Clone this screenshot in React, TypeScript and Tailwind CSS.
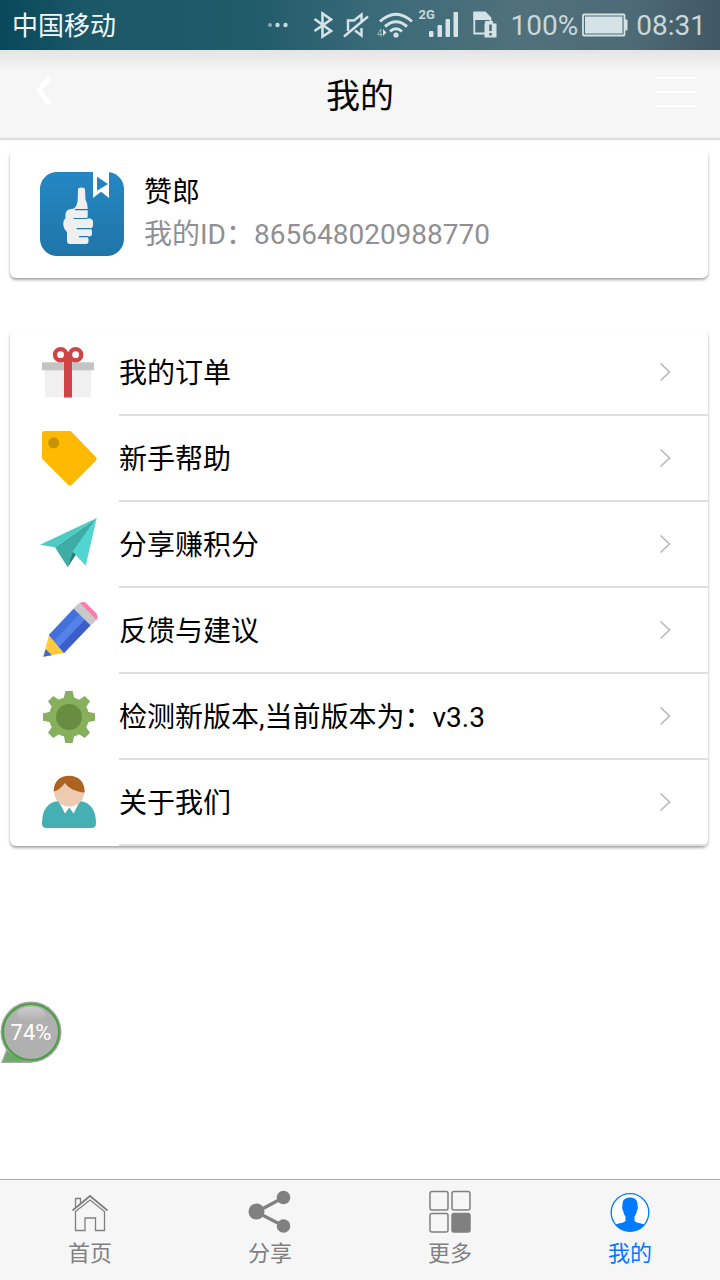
import React from 'react';

interface MenuItem {
  label: string;
  icon: React.ReactNode;
}

interface TabItem {
  label: string;
  icon: React.ReactNode;
  active?: boolean;
}

const GEAR_ANGLES = [0, 45, 90, 135, 180, 225, 270, 315];

function GiftIcon() {
  return (
    <svg width="60" height="60" viewBox="0 0 60 60" aria-hidden="true">
      <rect x="6" y="27" width="46" height="28.5" fill="#f0f0f0" />
      <rect x="3" y="20.3" width="52" height="8" fill="#c4c4c4" />
      <rect x="25" y="18" width="8" height="37.5" fill="#d04347" />
      <circle cx="21.6" cy="12.7" r="5.6" fill="#fff" stroke="#d04347" strokeWidth="4.4" />
      <circle cx="36.6" cy="12.7" r="5.6" fill="#fff" stroke="#d04347" strokeWidth="4.4" />
      <path d="M25 20.5V14l4-3 4 3v6.5z" fill="#d04347" />
    </svg>
  );
}

function TagIcon() {
  return (
    <svg width="60" height="60" viewBox="0 0 60 60" aria-hidden="true">
      <path d="M6 6H30.5L54.5 30.8L31 54.5L6 29.5Z" fill="#ffb900" stroke="#ffb900" strokeWidth="6" strokeLinejoin="round" />
      <circle cx="14.7" cy="14.8" r="5.5" fill="#c79300" />
    </svg>
  );
}

function PlaneIcon() {
  return (
    <svg width="60" height="60" viewBox="0 0 60 60" aria-hidden="true">
      <path d="M28.7 53.3L33.5 36L38 39Z" fill="#247f76" />
      <path d="M57.7 4L16 33.3L28.7 53.3L34 38Z" fill="#3dada6" />
      <path d="M1 30.7L57.7 4L16 33.3Z" fill="#4accc5" />
      <path d="M57.7 4L33.5 37.5L46.7 51.7Z" fill="#50d5d0" />
    </svg>
  );
}

function PencilIcon() {
  return (
    <svg width="60" height="60" viewBox="0 0 60 60" aria-hidden="true">
      <path d="M10 35L25 53L4.3 56.7Z" fill="#ffca3a" />
      <path d="M6.7 49.3L12.9 55.2L4.3 56.7Z" fill="#4267ce" />
      <path d="M9.7 35L35 8.3L51.7 25L25 53Z" fill="#4470dc" />
      <path d="M15 41L40.5 14L46 19.5L20 47Z" fill="#5582e8" />
      <path d="M20 47L46 19.5L51.7 25L25 53Z" fill="#3b5fca" />
      <path d="M34.5 8.5L39 4Q41.5 2 44 4L57 17Q58.5 19 56.5 21L51.7 25.5Z" fill="#c9c9cb" />
      <path d="M41 3Q44.5 1 47.5 3.500L56 12Q60 16 57.500 20Z" fill="#ff7bac" />
    </svg>
  );
}

function GearIcon() {
  return (
    <svg width="60" height="60" viewBox="0 0 60 60" aria-hidden="true">
      <g fill="#86b05b">
        <circle cx="30" cy="31" r="20" />
        {GEAR_ANGLES.map((angle) => (
          <path key={angle} d="M24.5 14L26.3 5H33.7L35.5 14Z" transform={`rotate(${angle} 30 31)`} />
        ))}
      </g>
      <circle cx="30" cy="31" r="13" fill="#688d40" />
    </svg>
  );
}

function PersonIcon() {
  return (
    <svg width="60" height="60" viewBox="0 0 60 60" aria-hidden="true">
      <path d="M3 51.5C3 37 9 30.5 19 29H41C51 30.5 57 37 57 51.5Q57 56 52.5 56H7.5Q3 56 3 51.5Z" fill="#44b0b3" />
      <path d="M19.500 29L26 41.500L30.300 35.500L34.600 41.500L41 29Z" fill="#fff" />
      <path d="M15 18C15 28 21 34.500 30.300 34.500S45.500 28 45.500 18Q40 9 30 9T15 18Z" fill="#edcbb0" />
      <path d="M14.700 19.500C14.700 9 21 3.700 30.300 3.700S46 10 45.700 20.500C37 20 29 16 26 11C22 16 19 18.500 14.700 19.500Z" fill="#ae6220" />
    </svg>
  );
}

function AppLogo() {
  return (
    <svg width="84" height="84" viewBox="0 0 84 84" aria-hidden="true">
      <defs>
        <linearGradient id="logo-bg" x1="0" y1="0" x2="0" y2="1">
          <stop offset="0" stopColor="#2487c3" />
          <stop offset="1" stopColor="#1f75a8" />
        </linearGradient>
      </defs>
      <rect width="84" height="84" rx="17" fill="url(#logo-bg)" />
      <path d="M53 0H69V26L61 19.700L53 26Z" fill="#fff" />
      <path d="M57 4.700L68 12L57 18.700Z" fill="#2385c0" />
      <path
        d="M38 17.500Q38 15.500 41.500 15.500T45 17.500L45.500 28Q47.500 31 47.700 37V44Q47.700 46.300 46 46.500H50Q53 47 53 50V53Q53 56.300 50 56.500H49Q52 57 52 59.500V62Q52 64.300 49 64.500H46.500Q48.500 65 48.500 67V70Q48.500 72 46 72H30Q27 72 27 69V60L24.500 57Q22.500 53 23.500 49L25.500 46V42Q26 37.500 31 37L34 36.500Q37.500 33 37.700 28Z"
        fill="#efefef"
      />
      <path d="M35.500 37.600H47.500M34 46.500H46.500M37 56.600H50M39.500 64.700H48" stroke="#2079ae" strokeWidth="1.200" strokeLinecap="round" />
    </svg>
  );
}

function Chevron() {
  return (
    <svg width="14" height="20" viewBox="0 0 14 20" fill="none" stroke="#b8b8b8" strokeWidth="1.600" aria-hidden="true">
      <path d="M2.500 1.500L11.500 10L2.500 18.500" />
    </svg>
  );
}

function HomeIcon() {
  return (
    <svg width="44" height="44" viewBox="0 0 44 44" fill="none" stroke="#808080" strokeWidth="1.300" aria-hidden="true">
      <path d="M4.500 20.500L22 6L39.500 20.500" strokeWidth="1.800" />
      <path d="M7.500 21.500L22 10L36.500 21.500V40.500H27.500V28H17V40.500H7.500Z" />
      <path d="M7.500 18V8.500H12.500V13.500" />
    </svg>
  );
}

function ShareIcon() {
  return (
    <svg width="44" height="44" viewBox="0 0 44 44" fill="#808080" aria-hidden="true">
      <path d="M35.500 7.500L8.500 22L35.500 36" fill="none" stroke="#808080" strokeWidth="3.200" />
      <circle cx="8.500" cy="21.500" r="8" />
      <circle cx="35.500" cy="7.500" r="6.800" />
      <circle cx="35.500" cy="36" r="6.800" />
    </svg>
  );
}

function MoreIcon() {
  return (
    <svg width="44" height="44" viewBox="0 0 44 44" fill="none" stroke="#808080" strokeWidth="1.500" aria-hidden="true">
      <rect x="2" y="1.500" width="18" height="18.500" rx="2" />
      <rect x="24" y="1.500" width="18" height="18.500" rx="2" />
      <rect x="2" y="23.500" width="18" height="18.500" rx="2" />
      <rect x="24" y="23.500" width="18" height="18.500" rx="2" fill="#808080" />
    </svg>
  );
}

function ProfileIcon() {
  return (
    <svg width="44" height="44" viewBox="0 0 44 44" aria-hidden="true">
      <defs>
        <clipPath id="profile-clip">
          <circle cx="22" cy="22.500" r="19" />
        </clipPath>
      </defs>
      <circle cx="22" cy="22.500" r="18.800" fill="#fff" stroke="#007aff" strokeWidth="1.300" />
      <path
        d="M22 7.500C27 7.500 30 10.500 29.500 15.500Q30.500 18 29 20.500Q28.500 24 26.500 26.500V31C29 33.500 35 33 39 36V44H5V36C9 33 15 33.500 17.500 31V26.500Q15.500 24 15 20.500Q13.500 18 14.500 15.500C14 10.500 17 7.500 22 7.500Z"
        fill="#007aff"
        clipPath="url(#profile-clip)"
      />
    </svg>
  );
}

function StatusBar() {
  return (
    <div className="flex h-[50px] items-center justify-between bg-[linear-gradient(90deg,#08485a_0%,#1b5767_12%,#205b6a_35%,#3a6a78_52%,#50717b_72%,#4d6a75_88%,#405863_100%)] pr-3.5 pl-3 text-[28px] text-[#c8d8dc]">
      <span className="pt-0.5 text-[26px] text-[#f0f8fa]">中国移动</span>
      <div className="flex items-center">
        <svg className="mr-6" width="22" height="6" viewBox="0 0 22 6" fill="#c9dade" aria-hidden="true">
          <circle cx="3" cy="3" r="2" opacity="0.600" />
          <circle cx="10.500" cy="3" r="2.200" />
          <circle cx="18.500" cy="3" r="2.200" />
        </svg>
        <svg className="mr-2.5" width="20" height="28" viewBox="0 0 20 28" fill="none" stroke="#d5e3e6" strokeWidth="2.600" aria-hidden="true">
          <path d="M1.500 8L18 20L9.500 25.500V2.500L18 8.500L1.500 20" />
        </svg>
        <svg className="mr-2" width="26" height="28" viewBox="0 0 26 28" fill="none" stroke="#d5e3e6" strokeWidth="2.400" aria-hidden="true">
          <path d="M5 20V9.500H11L18.500 3.500V12M18.500 17V24.500L12 19.500M1 25.500L25 5.500" />
        </svg>
        <svg className="mr-1.5" width="36" height="28" viewBox="0 0 36 28" fill="none" stroke="#d5e3e6" strokeWidth="3" aria-hidden="true">
          <path d="M3 10.500Q19 -4 35 10.500M8 15.500Q19 6 30 15.500M13 20.500Q19 15 25 20.500" />
          <circle cx="19" cy="24" r="2.600" fill="#d5e3e6" stroke="none" />
          <path d="M6 18V25L9.500 21.500Z" fill="#d5e3e6" stroke="none" />
          <path d="M4 26V18L0.500 23.500H5" strokeWidth="1" opacity="0.600" />
        </svg>
        <div className="relative mr-3.5 h-7 w-10">
          <span className="absolute -top-1 left-0 text-[13px] leading-4 font-bold">2G</span>
          <svg width="40" height="28" viewBox="0 0 40 28" fill="#d5e3e6" aria-hidden="true">
            <rect x="10" y="20" width="4.500" height="6" rx="1" />
            <rect x="18.500" y="14" width="4.500" height="12" rx="1" />
            <rect x="26.500" y="8" width="4.500" height="18" rx="1" />
            <rect x="34.500" y="1" width="4.500" height="25" rx="1" />
          </svg>
        </div>
        <svg className="mr-3.5" width="24" height="28" viewBox="0 0 24 28" aria-hidden="true">
          <path d="M1.300 1.500H12L17.500 7V11H13V22.500H1.300Z" fill="none" stroke="#d5e3e6" strokeWidth="1.800" />
          <path d="M0.500 1H12.500L18 7V9H0.500Z" fill="#d5e3e6" />
          <path d="M11.500 12.500H14V10H20V12.500H23.500V26.500H11.500Z" fill="#d5e3e6" />
          <path d="M17.500 13.500V20M17.500 22V24.500" stroke="#456773" strokeWidth="2.400" />
        </svg>
        <span className="mr-1 pt-0.5">100%</span>
        <svg className="mr-2" width="46" height="24" viewBox="0 0 46 24" aria-hidden="true">
          <rect x="1" y="1.500" width="41.500" height="21" rx="1" fill="none" stroke="#d5e3e6" strokeWidth="1.800" />
          <rect x="3" y="3.500" width="37.500" height="17" fill="#d5e3e6" />
          <rect x="42.500" y="6.500" width="3" height="11" rx="1" fill="#d5e3e6" />
        </svg>
        <span className="pt-0.5">08:31</span>
      </div>
    </div>
  );
}

const menuItems: MenuItem[] = [
  { label: '我的订单', icon: <GiftIcon /> },
  { label: '新手帮助', icon: <TagIcon /> },
  { label: '分享赚积分', icon: <PlaneIcon /> },
  { label: '反馈与建议', icon: <PencilIcon /> },
  { label: '检测新版本,当前版本为：v3.3', icon: <GearIcon /> },
  { label: '关于我们', icon: <PersonIcon /> },
];

const tabs: TabItem[] = [
  { label: '首页', icon: <HomeIcon /> },
  { label: '分享', icon: <ShareIcon /> },
  { label: '更多', icon: <MoreIcon /> },
  { label: '我的', icon: <ProfileIcon />, active: true },
];

export default function App() {
  return (
    <div className="relative flex min-h-screen flex-col bg-white font-[Roboto,'Noto_Sans_CJK_SC',sans-serif] text-black">
      <StatusBar />

      {/* Header */}
      <header className="flex h-[90px] items-center justify-between border-b-2 border-[#dedede] bg-[linear-gradient(#e4e4e4,#f6f6f6_20px)] px-6 pb-1">
        <button type="button" aria-label="返回" className="flex w-10 justify-center">
          <svg width="20" height="34" viewBox="0 0 20 34" fill="none" stroke="#fff" strokeWidth="5" aria-hidden="true">
            <path d="M15.500 2.500L5 15.500L15.500 29" />
          </svg>
        </button>
        <h1 className="pt-2 text-[34px]">我的</h1>
        <button type="button" aria-label="菜单" className="flex w-10 flex-col gap-3">
          <span className="h-0.5 w-full bg-white" />
          <span className="h-0.5 w-full bg-white" />
          <span className="h-0.5 w-full bg-white" />
        </button>
      </header>

      <main className="flex-1 pt-2.5 pr-3 pl-2.5">
        {/* Account card */}
        <section className="flex h-32 items-center gap-5 rounded-md px-[30px] shadow-[0_2px_3px_rgba(0,0,0,0.35)]">
          <AppLogo />
          <div className="text-[28px] leading-[42px]">
            <p>赞郎</p>
            <p className="text-[#8f8f94]">我的ID：865648020988770</p>
          </div>
        </section>

        {/* Menu */}
        <ul className="mt-[52px] rounded-md shadow-[0_2px_3px_rgba(0,0,0,0.35)]">
          {menuItems.map((item) => (
            <li key={item.label}>
              <a href="#" className="flex h-[86px] gap-5 pl-[29px]">
                <span className="pt-3">{item.icon}</span>
                <span className="flex flex-1 items-center justify-between border-b-2 border-[#dfdfdf] pr-9 text-[28px]">
                  <span className="pt-1">{item.label}</span>
                  <Chevron />
                </span>
              </a>
            </li>
          ))}
        </ul>
      </main>

      {/* Floating memory bubble */}
      <button type="button" className="absolute top-[1001px] left-0 h-[62px] w-[62px] text-[22px] text-white">
        <svg className="absolute inset-0" width="62" height="62" viewBox="0 0 62 62" aria-hidden="true">
          <defs>
            <linearGradient id="bubble-shine" x1="0" y1="0" x2="0" y2="1">
              <stop offset="0" stopColor="#cccccc" />
              <stop offset="1" stopColor="#b0b0b0" />
            </linearGradient>
          </defs>
          <path d="M8 46L2 61.500H31Z" fill="#6fa86b" stroke="#a6a6a6" strokeWidth="1.500" />
          <circle cx="31" cy="31" r="30.500" fill="#a3a3a3" />
          <path d="M8 51L5 60H24Z" fill="#6fa86b" />
          <circle cx="31" cy="31" r="28" fill="#b0b0b0" stroke="#46a33c" strokeWidth="2" />
          <ellipse cx="31" cy="13" rx="14" ry="7.500" fill="url(#bubble-shine)" />
        </svg>
        <span className="relative">74%</span>
      </button>

      {/* Tab bar */}
      <nav className="grid h-[101px] grid-cols-4 border-t border-[#a8a8a8] bg-[#f6f6f6]">
        {tabs.map((tab) => (
          <a
            key={tab.label}
            href="#"
            className={`flex flex-col items-center pt-2.5 text-[22px] ${tab.active ? 'text-[#007aff]' : 'text-[#808080]'}`}
          >
            {tab.icon}
            <span className="leading-10">{tab.label}</span>
          </a>
        ))}
      </nav>
    </div>
  );
}
